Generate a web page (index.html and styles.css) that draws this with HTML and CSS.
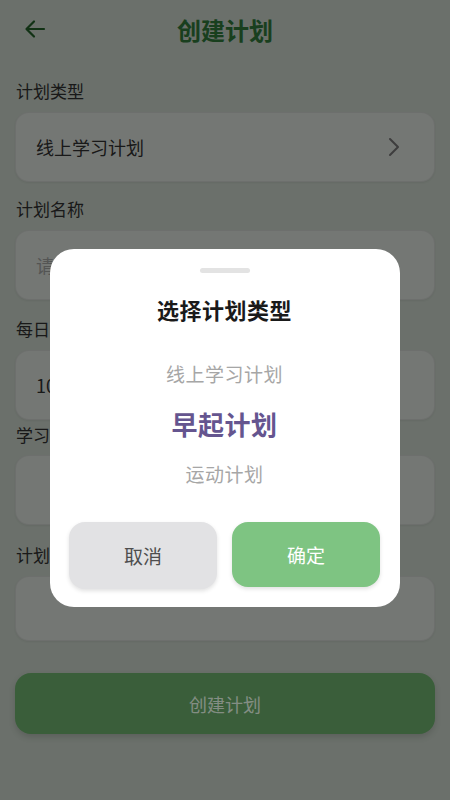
FILE: index.html
```html
<!DOCTYPE html>
<html lang="zh-CN">
<head>
<meta charset="utf-8">
<title>创建计划</title>
<link rel="stylesheet" href="styles.css">
</head>
<body>
<div class="page">
  <header class="header">
    <span class="back">
      <svg width="22" height="20" viewBox="0 0 22 20"><path d="M20 10H3M10 2.5L2.5 10L10 17.5" fill="none" stroke="currentColor" stroke-width="2.2" stroke-linecap="round" stroke-linejoin="round"/></svg>
    </span>
    <h1 class="title">创建计划</h1>
  </header>
  <main class="form">
    <div class="label">计划类型</div>
    <div class="field field-select">
      <span class="value">线上学习计划</span>
      <svg class="chev" width="12" height="20" viewBox="0 0 12 20"><path d="M2 2L10 10L2 18" fill="none" stroke="currentColor" stroke-width="2" stroke-linecap="round" stroke-linejoin="round"/></svg>
    </div>
    <div class="label">计划名称</div>
    <div class="field field-name"><span class="placeholder">请输入计划名称</span></div>
    <div class="label">每日学习时长（分钟）</div>
    <div class="field field-tight"><span class="value">10</span></div>
    <div class="label label-tight">学习内容</div>
    <div class="field field-wide"></div>
    <div class="label">计划描述</div>
    <div class="field field-short"></div>
    <button class="create">创建计划</button>
  </main>
</div>
<div class="overlay">
  <div class="sheet">
    <div class="handle"></div>
    <div class="sheet-title">选择计划类型</div>
    <div class="picker">
      <div class="option">线上学习计划</div>
      <div class="option selected">早起计划</div>
      <div class="option">运动计划</div>
    </div>
    <div class="actions">
      <button class="btn cancel">取消</button>
      <button class="btn ok">确定</button>
    </div>
  </div>
</div>
</body>
</html>
```
FILE: styles.css
```css
* { box-sizing: border-box; }
html, body { margin: 0; padding: 0; }
body {
  width: 450px;
  height: 800px;
  overflow: hidden;
  background: #b2bbb2;
  font-family: "Noto Sans CJK SC", "Noto Sans", sans-serif;
}
.page { padding: 0 15px; }
.header {
  height: 60px;
  display: flex;
  align-items: center;
  justify-content: center;
  position: relative;
}
.back {
  position: absolute;
  left: 9px;
  top: 19px;
  color: #1e5424;
  display: flex;
}
.title {
  margin: 0;
  font-size: 24px;
  font-weight: 700;
  color: #2a6a32;
  line-height: 60px;
}
.form { display: flex; flex-direction: column; padding-top: 20px; }
.label {
  font-size: 17px;
  line-height: 22px;
  color: #2a2a2a;
  margin-left: 1px;
  margin-bottom: 10px;
  white-space: nowrap;
}
.label-tight { margin-bottom: 9px; }
.field {
  height: 70px;
  border-radius: 14px;
  background: #c2c6c2;
  border: 1px solid rgba(0,0,0,0.06);
  box-shadow: 0 1px 2px rgba(0,0,0,0.06);
  display: flex;
  align-items: center;
  padding: 0 20px;
  margin-bottom: 16px;
}
.field-name { margin-bottom: 18px; }
.field-tight { margin-bottom: 4px; }
.field-wide { margin-bottom: 19px; }
.field-short { height: 65px; margin-bottom: 32px; }
.value { font-size: 18px; color: #2a2a2a; }
.placeholder { font-size: 18px; color: #8c8e8c; }
.field-select { justify-content: space-between; padding-right: 34px; }
.chev { color: #666; }
.create {
  height: 61px;
  border: none;
  border-radius: 16px;
  background: #619d61;
  color: #dcecdc;
  font-family: inherit;
  font-size: 18px;
  box-shadow: 0 3px 6px rgba(0,0,0,0.15);
}
.overlay {
  position: fixed;
  inset: 0;
  background: rgba(0,0,0,0.4);
  display: flex;
  justify-content: center;
  align-items: flex-start;
  padding-top: 249px;
}
.sheet {
  width: 350px;
  background: #fff;
  border-radius: 24px;
  padding: 19px 20px 18px 19px;
  display: flex;
  flex-direction: column;
  align-items: center;
}
.handle {
  width: 50px;
  height: 5px;
  border-radius: 3px;
  background: #e3e3e3;
}
.sheet-title {
  margin-top: 21px;
  font-size: 22px;
  line-height: 30px;
  font-weight: 700;
  letter-spacing: 0.5px;
  color: #1a1a1a;
}
.picker {
  margin-top: 24px;
  display: flex;
  flex-direction: column;
  align-self: stretch;
}
.option {
  height: 50px;
  display: flex;
  align-items: center;
  justify-content: center;
  font-size: 19px;
  letter-spacing: 0.5px;
  color: #a6a6a6;
}
.option.selected {
  font-size: 26px;
  font-weight: 700;
  color: #65558f;
}
.actions {
  margin-top: 24px;
  align-self: stretch;
  display: grid;
  grid-template-columns: 1fr 1fr;
  gap: 15px;
}
.btn {
  height: 67px;
  border: none;
  border-radius: 16px;
  font-family: inherit;
  font-size: 19px;
  box-shadow: 0 2px 4px rgba(0,0,0,0.12);
}
.cancel { background: #e2e2e4; color: #4e4e4e; }
.ok { background: #7ec482; color: #fff; height: 65px; }
```
